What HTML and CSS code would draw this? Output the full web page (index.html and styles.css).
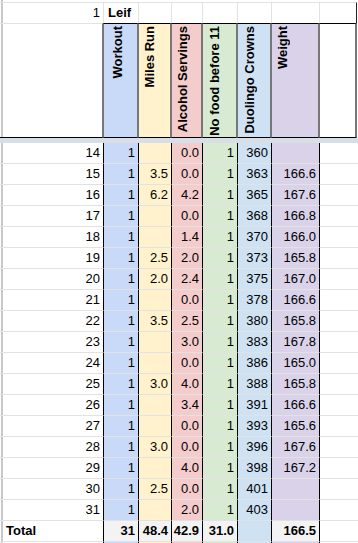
FILE: index.html
```html
<!DOCTYPE html>
<html>
<head>
<meta charset="utf-8">
<link rel="stylesheet" href="styles.css">
</head>
<body>
<div class="sheet">
  <div class="row r1">
    <div class="c a">1</div>
    <div class="c l bold">Leif</div>
    <div class="c"></div><div class="c"></div><div class="c"></div><div class="c"></div><div class="c"></div><div class="c h"></div>
  </div>
  <div class="row hdr">
    <div class="c a"></div>
    <div class="c b1 wk"><span class="rot">Workout</span></div>
    <div class="c y"><span class="rot">Miles Run</span></div>
    <div class="c r"><span class="rot">Alcohol Servings</span></div>
    <div class="c g nf"><span class="rot">No food before 11</span></div>
    <div class="c b2 dc"><span class="rot">Duolingo Crowns</span></div>
    <div class="c p"><span class="rot">Weight</span></div>
    <div class="c h"></div>
  </div>
  <div class="freeze"></div>
  <div class="row data"><div class="c a">14</div><div class="c b1">1</div><div class="c y"></div><div class="c r">0.0</div><div class="c g">1</div><div class="c b2">360</div><div class="c p"></div><div class="c h"></div></div>
  <div class="row data"><div class="c a">15</div><div class="c b1">1</div><div class="c y">3.5</div><div class="c r">0.0</div><div class="c g">1</div><div class="c b2">363</div><div class="c p">166.6</div><div class="c h"></div></div>
  <div class="row data"><div class="c a">16</div><div class="c b1">1</div><div class="c y">6.2</div><div class="c r">4.2</div><div class="c g">1</div><div class="c b2">365</div><div class="c p">167.6</div><div class="c h"></div></div>
  <div class="row data"><div class="c a">17</div><div class="c b1">1</div><div class="c y"></div><div class="c r">0.0</div><div class="c g">1</div><div class="c b2">368</div><div class="c p">166.8</div><div class="c h"></div></div>
  <div class="row data"><div class="c a">18</div><div class="c b1">1</div><div class="c y"></div><div class="c r">1.4</div><div class="c g">1</div><div class="c b2">370</div><div class="c p">166.0</div><div class="c h"></div></div>
  <div class="row data"><div class="c a">19</div><div class="c b1">1</div><div class="c y">2.5</div><div class="c r">2.0</div><div class="c g">1</div><div class="c b2">373</div><div class="c p">165.8</div><div class="c h"></div></div>
  <div class="row data"><div class="c a">20</div><div class="c b1">1</div><div class="c y">2.0</div><div class="c r">2.4</div><div class="c g">1</div><div class="c b2">375</div><div class="c p">167.0</div><div class="c h"></div></div>
  <div class="row data"><div class="c a">21</div><div class="c b1">1</div><div class="c y"></div><div class="c r">0.0</div><div class="c g">1</div><div class="c b2">378</div><div class="c p">166.6</div><div class="c h"></div></div>
  <div class="row data"><div class="c a">22</div><div class="c b1">1</div><div class="c y">3.5</div><div class="c r">2.5</div><div class="c g">1</div><div class="c b2">380</div><div class="c p">165.8</div><div class="c h"></div></div>
  <div class="row data"><div class="c a">23</div><div class="c b1">1</div><div class="c y"></div><div class="c r">3.0</div><div class="c g">1</div><div class="c b2">383</div><div class="c p">167.8</div><div class="c h"></div></div>
  <div class="row data"><div class="c a">24</div><div class="c b1">1</div><div class="c y"></div><div class="c r">0.0</div><div class="c g">1</div><div class="c b2">386</div><div class="c p">165.0</div><div class="c h"></div></div>
  <div class="row data"><div class="c a">25</div><div class="c b1">1</div><div class="c y">3.0</div><div class="c r">4.0</div><div class="c g">1</div><div class="c b2">388</div><div class="c p">165.8</div><div class="c h"></div></div>
  <div class="row data"><div class="c a">26</div><div class="c b1">1</div><div class="c y"></div><div class="c r">3.4</div><div class="c g">1</div><div class="c b2">391</div><div class="c p">166.6</div><div class="c h"></div></div>
  <div class="row data"><div class="c a">27</div><div class="c b1">1</div><div class="c y"></div><div class="c r">0.0</div><div class="c g">1</div><div class="c b2">393</div><div class="c p">165.6</div><div class="c h"></div></div>
  <div class="row data"><div class="c a">28</div><div class="c b1">1</div><div class="c y">3.0</div><div class="c r">0.0</div><div class="c g">1</div><div class="c b2">396</div><div class="c p">167.6</div><div class="c h"></div></div>
  <div class="row data"><div class="c a">29</div><div class="c b1">1</div><div class="c y"></div><div class="c r">4.0</div><div class="c g">1</div><div class="c b2">398</div><div class="c p">167.2</div><div class="c h"></div></div>
  <div class="row data"><div class="c a">30</div><div class="c b1">1</div><div class="c y">2.5</div><div class="c r">0.0</div><div class="c g">1</div><div class="c b2">401</div><div class="c p"></div><div class="c h"></div></div>
  <div class="row data"><div class="c a">31</div><div class="c b1">1</div><div class="c y"></div><div class="c r">2.0</div><div class="c g">1</div><div class="c b2">403</div><div class="c p"></div><div class="c h"></div></div>
  <div class="row data total"><div class="c a l bold">Total</div><div class="c t">31</div><div class="c t">48.4</div><div class="c t">42.9</div><div class="c t">31.0</div><div class="c b2"></div><div class="c t">166.5</div><div class="c h"></div></div>
  <div class="row data"><div class="c a"></div><div class="c b1"></div><div class="c y"></div><div class="c r"></div><div class="c g"></div><div class="c b2"></div><div class="c p"></div><div class="c h"></div></div>
</div>
</body>
</html>
```
FILE: styles.css
```css
html, body {
  margin: 0;
  padding: 0;
  background: #fff;
}
.sheet {
  width: 358px;
  height: 543px;
  overflow: hidden;
  padding-top: 2px;
  box-sizing: border-box;
  background: linear-gradient(#c8c8c8, #c8c8c8) 1px 0 / 2px 100% no-repeat;
  font-family: "Liberation Sans", Arial, sans-serif;
  font-size: 13px;
  color: #000;
}
.row {
  display: grid;
  grid-template-columns: 103px 35px 33px 31px 35px 34px 48px 39px;
}
.c {
  box-sizing: border-box;
  height: 21px;
  line-height: 20px;
  padding-right: 3px;
  text-align: right;
  white-space: nowrap;
  overflow: hidden;
  border-bottom: 1px solid #e2e2e2;
}
.l { text-align: left; padding-left: 4px; }
.a.l { padding-left: 6px; }
.bold { font-weight: bold; }

.b1 { background: #c9daf8; }
.y  { background: #fff2cc; }
.r  { background: #f4cccc; }
.g  { background: #d9ead3; }
.b2 { background: #cfe2f3; }
.p  { background: #d9d2e9; }
.t  { background: #f3f3f3; font-weight: bold; }

/* row 1 */
.r1 .c {
  border-bottom: 0;
  height: 21px;
  border-top: 1px solid #e2e2e2;
}
.r1 .c + .c { border-left: 1px solid #e2e2e2; }
.r1 .h { border-right: 1px solid #222; margin-right: 1px; }

/* header */
.hdr .c {
  height: 115px;
  border-top: 1px solid #000;
  border-bottom: 1px solid #000;
  border-right: 1px solid #777;
  display: flex;
  align-items: flex-start;
  padding: 0 0 0 3px;
}
.hdr .c + .c { border-left: 1px solid #777; }
.hdr .a { border-top-color: #e2e2e2; }
.hdr .h { border-right: 2px solid #777; margin-right: 1px; }
.hdr .wk { padding-left: 6px; }
.hdr .nf, .hdr .dc { padding-left: 4px; }
.rot {
  writing-mode: vertical-rl;
  transform: rotate(180deg);
  font-weight: bold;
  line-height: 15px;
  margin-top: 2px;
}
.freeze {
  height: 5px;
  background: #d8dee5;
}

/* data */
.data .c + .c { border-left: 1px solid #000; }
.data .h { border-left: 1px solid #000; }
.total .a { border-bottom-color: #e2e2e2; }
.t, .total .b2 { border-bottom-color: #e2e2e2; }
```
